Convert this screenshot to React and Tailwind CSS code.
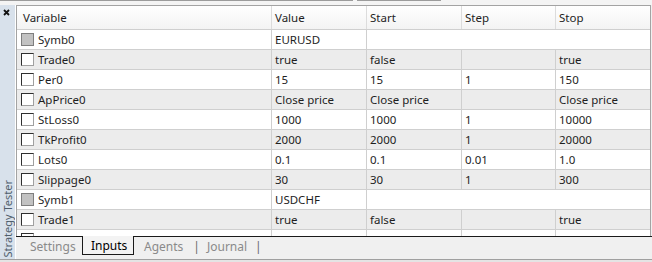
import React from 'react';

const rows = [
  { name: 'Symb0', symbol: true, value: 'EURUSD' },
  { name: 'Trade0', cells: ['true', 'false', '', 'true'] },
  { name: 'Per0', cells: ['15', '15', '1', '150'] },
  { name: 'ApPrice0', cells: ['Close price', 'Close price', '', 'Close price'] },
  { name: 'StLoss0', cells: ['1000', '1000', '1', '10000'] },
  { name: 'TkProfit0', cells: ['2000', '2000', '1', '20000'] },
  { name: 'Lots0', cells: ['0.1', '0.1', '0.01', '1.0'] },
  { name: 'Slippage0', cells: ['30', '30', '1', '300'] },
  { name: 'Symb1', symbol: true, value: 'USDCHF' },
  { name: 'Trade1', cells: ['true', 'false', '', 'true'] },
  { name: 'Per1', cells: ['15', '15', '1', '150'] },
];

const widths = ['w-[95px]', 'w-[95px]', 'w-[94px]', 'flex-1'];

function CheckBox({ disabled }) {
  return disabled ? (
    <span className="w-[13px] h-[13px] shrink-0 border border-[#7e7e7e] bg-[#c2c2c2]" />
  ) : (
    <span className="w-[13px] h-[13px] shrink-0 border border-[#2e2e2e] border-r-[#a0a0a0] border-b-[#a0a0a0] bg-white" />
  );
}

function Row({ row, index }) {
  const bg = index % 2 === 1 ? 'bg-[#ececec]' : 'bg-white';
  return (
    <div className={`flex h-[20px] shrink-0 border-b border-[#cfcfcf] ${bg}`}>
      <div className="w-[255px] flex items-center gap-[4px] pl-[4px] border-r border-[#cfcfcf]">
        <CheckBox disabled={row.symbol} />
        <span>{row.name}</span>
      </div>
      {row.symbol ? (
        <>
          <div className="w-[95px] flex items-center pl-[3px] border-r border-[#cfcfcf]">{row.value}</div>
          <div className="flex-1" />
        </>
      ) : (
        row.cells.map((c, i) => (
          <div
            key={i}
            className={`${widths[i]} flex items-center pl-[3px] ${i < 3 ? 'border-r border-[#cfcfcf]' : ''}`}
          >
            {c}
          </div>
        ))
      )}
    </div>
  );
}

export default function App() {
  return (
    <div className="w-[652px] h-[262px] bg-[#f0f0f0] flex flex-col overflow-hidden text-[11.5px] text-[#1e1e1e] font-['Noto_Sans',sans-serif] leading-none">
      <div className="h-[5px] shrink-0 flex items-start bg-[#f4f4f4]">
        <div className="w-[353px] h-px bg-[#9c9c9c]" />
        <div className="w-[4px]" />
        <div className="w-[84px] h-px bg-[#9c9c9c]" />
      </div>

      <div className="flex flex-1 min-h-0">
        <aside className="w-[15px] shrink-0 bg-[#d8e1eb] flex flex-col items-center justify-between pb-[2px]">
          <svg width="7" height="7" viewBox="0 0 7 7" className="mt-[4px] ml-[-2px]">
            <path d="M1 1 L6 6 M6 1 L1 6" stroke="#111" strokeWidth="1.8" />
          </svg>
          <span className="[writing-mode:vertical-rl] rotate-180 text-[#4f5d6b] text-[11px]">
            Strategy Tester
          </span>
        </aside>
        <div className="w-px bg-white shrink-0" />

        <div className="flex-1 flex flex-col min-w-0">
          <div className="h-[231px] shrink-0 overflow-hidden border-t border-l border-r border-[#a3a3a3] bg-white mr-px">
            <div className="flex h-[24px] border-b border-[#cfcfcf] bg-gradient-to-b from-white to-[#f3f3f3]">
              <div className="w-[255px] flex items-center pl-[6px] border-r border-[#dcdcdc]">Variable</div>
              <div className="w-[95px] flex items-center pl-[3px] border-r border-[#dcdcdc]">Value</div>
              <div className="w-[95px] flex items-center pl-[3px] border-r border-[#dcdcdc]">Start</div>
              <div className="w-[94px] flex items-center pl-[3px] border-r border-[#dcdcdc]">Step</div>
              <div className="flex-1 flex items-center pl-[3px]">Stop</div>
            </div>
            {rows.map((r, i) => (
              <Row key={r.name} row={r} index={i} />
            ))}
          </div>

          <div className="h-[23px] shrink-0 flex text-[12px]">
            <div className="w-[66px] border-t border-[#1a1a1a] flex items-center pl-[14px] pb-[2px] text-[#8a8a8a]">
              Settings
            </div>
            <div className="w-[52px] h-[19px] border-l border-r border-b border-[#1a1a1a] flex items-center pl-[8px] pt-[1px] text-black bg-[#f3f3f3]">
              Inputs
            </div>
            <div className="flex-1 border-t border-[#1a1a1a] flex items-center pb-[2px] text-[#8a8a8a]">
              <span className="ml-[10px]">Agents</span>
              <span className="ml-[10px] text-[#6a6a6a]">|</span>
              <span className="ml-[7px]">Journal</span>
              <span className="ml-[8px] text-[#6a6a6a]">|</span>
            </div>
          </div>
        </div>
      </div>

      <div className="h-[3px] shrink-0 border-t border-[#a0a0a0] bg-[#e4e4e4]" />
    </div>
  );
}
